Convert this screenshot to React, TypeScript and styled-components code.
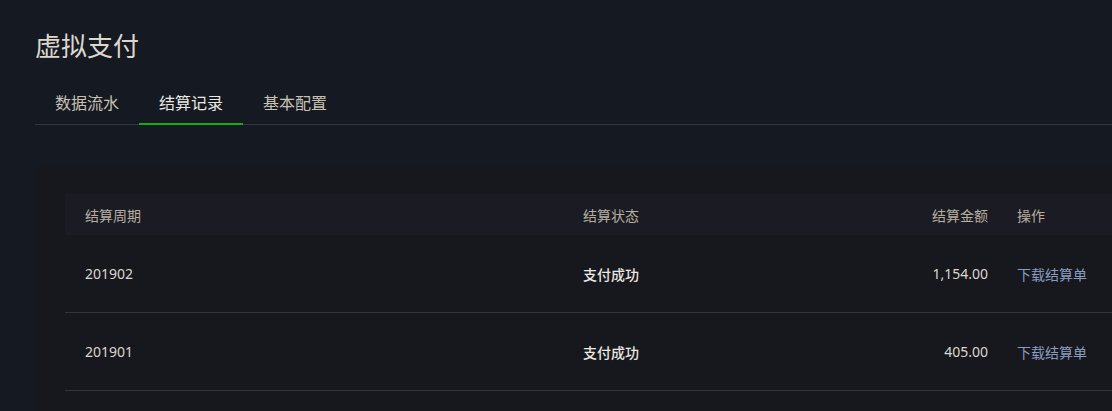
import React from "react";
import styled, { createGlobalStyle } from "styled-components";

const GlobalStyle = createGlobalStyle`
  html, body {
    margin: 0;
    padding: 0;
    background: #151922;
    overflow: hidden;
  }
  body {
    font-family: "Noto Sans", "Noto Sans CJK SC", sans-serif;
  }
`;

const tabs = ["数据流水", "结算记录", "基本配置"];

const rows = [
  { period: "201902", status: "支付成功", amount: "1,154.00" },
  { period: "201901", status: "支付成功", amount: "405.00" },
];

function App() {
  return (
    <>
      <GlobalStyle />
      <Page>
        <Title>虚拟支付</Title>
        <TabBar>
          {tabs.map((t, i) => (
            <Tab key={t} active={i === 1}>
              {t}
            </Tab>
          ))}
        </TabBar>
        <Card>
          <Table>
            <HeadRow>
              <HeadCell>结算周期</HeadCell>
              <HeadCell>结算状态</HeadCell>
              <HeadCell align="right">结算金额</HeadCell>
              <HeadCell action>操作</HeadCell>
            </HeadRow>
            {rows.map((r) => (
              <Row key={r.period}>
                <Cell>{r.period}</Cell>
                <Cell strong>{r.status}</Cell>
                <Cell align="right">{r.amount}</Cell>
                <Cell action>
                  <Link>下载结算单</Link>
                </Cell>
              </Row>
            ))}
          </Table>
        </Card>
      </Page>
    </>
  );
}

const Page = styled.div`
  padding: 27px 0 0 35px;
`;

const Title = styled.h1`
  margin: 0;
  font-size: 26px;
  line-height: 38px;
  font-weight: 400;
  color: #dcd6cc;
`;

const TabBar = styled.div`
  display: flex;
  margin-top: 18px;
  border-bottom: 1px solid #34343c;
`;

const Tab = styled.div<{ active?: boolean }>`
  width: 104px;
  box-sizing: border-box;
  text-align: center;
  font-size: 16px;
  line-height: 24px;
  padding: 8px 0 8px;
  margin-bottom: -1px;
  color: ${({ active }) => (active ? "#ece8e0" : "#c9c1b2")};
  border-bottom: 2px solid ${({ active }) => (active ? "#16a916" : "transparent")};
`;

const Card = styled.div`
  margin-top: 41px;
  background: #17171e;
  padding: 28px 0 40px 30px;
`;

const Table = styled.div`
  display: grid;
  grid-template-columns: 498px 320px 117px 1fr;
`;

const HeadRow = styled.div`
  display: contents;
  & > div {
    background: #1b1b23;
    height: 41px;
  }
`;

const Row = styled.div`
  display: contents;
  & > div {
    height: 77px;
    border-bottom: 1px solid #34333a;
  }
`;

const HeadCell = styled.div<{ align?: string; action?: boolean }>`
  display: flex;
  align-items: center;
  justify-content: ${({ align }) => (align === "right" ? "flex-end" : "flex-start")};
  padding: 0 ${({ align }) => (align === "right" ? "12px" : "0")} 0 ${({ action }) => (action ? "17px" : "20px")};
  font-size: 14px;
  color: #b6ae9f;
  white-space: nowrap;
`;

const Cell = styled.div<{ align?: string; action?: boolean; strong?: boolean }>`
  display: flex;
  align-items: center;
  justify-content: ${({ align }) => (align === "right" ? "flex-end" : "flex-start")};
  padding: 0 ${({ align }) => (align === "right" ? "12px" : "0")} 0 ${({ action }) => (action ? "17px" : "20px")};
  font-size: 14px;
  font-weight: ${({ strong }) => (strong ? 500 : 400)};
  color: ${({ strong }) => (strong ? "#ebe7e1" : "#ddd8cf")};
  white-space: nowrap;
`;

const Link = styled.span`
  color: #8a9bc0;
  font-size: 14px;
  cursor: pointer;
`;

export default App;
